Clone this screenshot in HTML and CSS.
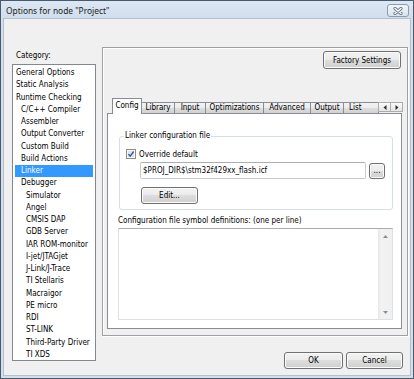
FILE: index.html
```html
<!DOCTYPE html>
<html>
<head>
    <meta charset="utf-8">
    <title>Options for node "Project"</title>
    <link rel="stylesheet" href="styles.css">
</head>
<body>
    <div class="window">
        <div class="titlebar">
            <span class="title">Options for node "Project"</span>
            <span class="close">
                <svg width="10" height="8" viewBox="0 0 10 8"><path d="M2 1.5L8 6.5M8 1.5L2 6.5" stroke="#6a788a" stroke-width="3.2" stroke-linecap="round"/><path d="M2 1.5L8 6.5M8 1.5L2 6.5" stroke="#fff" stroke-width="1.4" stroke-linecap="round"/></svg>
            </span>
        </div>

        <div class="client">
            <div class="category">
                <div class="cat-label">Category:</div>
                <ul class="cat-list">
                    <li>General Options</li>
                    <li>Static Analysis</li>
                    <li>Runtime Checking</li>
                    <li class="lvl1">C/C++ Compiler</li>
                    <li class="lvl1">Assembler</li>
                    <li class="lvl1">Output Converter</li>
                    <li class="lvl1">Custom Build</li>
                    <li class="lvl1">Build Actions</li>
                    <li class="lvl1 selected">Linker</li>
                    <li class="lvl1">Debugger</li>
                    <li class="lvl2">Simulator</li>
                    <li class="lvl2">Angel</li>
                    <li class="lvl2">CMSIS DAP</li>
                    <li class="lvl2">GDB Server</li>
                    <li class="lvl2">IAR ROM-monitor</li>
                    <li class="lvl2">I-jet/JTAGjet</li>
                    <li class="lvl2">J-Link/J-Trace</li>
                    <li class="lvl2">TI Stellaris</li>
                    <li class="lvl2">Macraigor</li>
                    <li class="lvl2">PE micro</li>
                    <li class="lvl2">RDI</li>
                    <li class="lvl2">ST-LINK</li>
                    <li class="lvl2">Third-Party Driver</li>
                    <li class="lvl2">TI XDS</li>
                </ul>
            </div>

            <div class="right">
                <div class="panel">
                    <div class="panel-top">
                        <button class="btn factory">Factory Settings</button>
                    </div>

                    <div class="tab-strip">
                        <div class="tab active w-config">Config</div>
                        <div class="tab w-library">Library</div>
                        <div class="tab w-input">Input</div>
                        <div class="tab w-optim">Optimizations</div>
                        <div class="tab w-adv">Advanced</div>
                        <div class="tab w-output">Output</div>
                        <div class="tab w-list">List</div>
                        <div class="tab-arrows">
                            <span class="arrow"><svg width="4" height="5" viewBox="0 0 4 5"><path d="M3.5 0L0.5 2.5L3.5 5Z" fill="#2b2b2b"/></svg></span>
                            <span class="arrow"><svg width="4" height="5" viewBox="0 0 4 5"><path d="M0.5 0L3.5 2.5L0.5 5Z" fill="#2b2b2b"/></svg></span>
                        </div>
                    </div>

                    <div class="tab-page">
                        <div class="group">
                            <div class="group-title">Linker configuration file</div>
                            <div class="check-row">
                                <svg class="checkbox" width="10" height="10" viewBox="0 0 10 10"><rect x="0.5" y="0.5" width="9" height="9" fill="#f6f6f6" stroke="#8e8f8f"/><rect x="2" y="2" width="6" height="6" fill="#dde4ec"/><path d="M2.4 5.1L4.2 7.2L7.7 2.5" fill="none" stroke="#3d5b8c" stroke-width="1.4"/></svg>
                                <span>Override default</span>
                            </div>
                            <div class="field-row">
                                <div class="field">$PROJ_DIR$\stm32f429xx_flash.icf</div>
                                <button class="btn browse">...</button>
                            </div>
                            <div class="edit-row">
                                <button class="btn edit">Edit...</button>
                            </div>
                        </div>

                        <div class="defs-label">Configuration file symbol definitions: (one per line)</div>
                        <div class="defs-box">
                            <div class="vscroll">
                                <span class="sarrow"><svg width="5" height="3" viewBox="0 0 5 3"><path d="M0 3L2.5 0L5 3Z" fill="#8d8d8d"/></svg></span>
                                <span class="sarrow"><svg width="5" height="3" viewBox="0 0 5 3"><path d="M0 0L2.5 3L5 0Z" fill="#8d8d8d"/></svg></span>
                            </div>
                        </div>
                    </div>
                </div>

                <div class="footer">
                    <button class="btn ok">OK</button>
                    <button class="btn cancel">Cancel</button>
                </div>
            </div>
        </div>
    </div>
</body>
</html>
```

FILE: styles.css
```css
* {
    margin: 0;
    padding: 0;
    box-sizing: border-box;
}
body {
    background: #f0f0f0;
    font-family: "DejaVu Sans Condensed", "Liberation Sans", sans-serif;
    font-size: 8px;
    color: #000;
}
.window {
    width: 414px;
    height: 379px;
    border: 1px solid #4b5a6b;
    background: #d3dfec;
    display: flex;
    flex-direction: column;
}
.titlebar {
    height: 18px;
    display: flex;
    align-items: flex-start;
    padding: 3px 4px 0 5px;
    background: linear-gradient(#dce7f4, #d0ddec);
}
.title {
    font-family: "Noto Sans", "Liberation Sans", sans-serif;
    font-size: 8.4px;
    line-height: 13px;
    color: #1c1c1c;
}
.close {
    margin-left: auto;
    width: 22px;
    height: 13px;
    border: 1px solid #8d9bae;
    border-radius: 3px;
    background: linear-gradient(#f1f5fa, #d9e3ee);
    display: flex;
    align-items: center;
    justify-content: center;
}
.client {
    flex: 1;
    margin: 0 3px 3px;
    background: #f0f0f0;
    display: flex;
    padding: 28px 0 0 8px;
    box-shadow: 0 0 0 1px #b3c0cf;
}

/* category list */
.category {
    width: 84px;
}
.cat-label {
    height: 17px;
    line-height: 17px;
    padding-left: 4px;
}
.cat-list {
    list-style: none;
    height: 297px;
    background: #fff;
    border: 1px solid #828790;
    padding: 2px 2px 0;
}
.cat-list li {
    height: 12.26px;
    line-height: 12.26px;
    padding-left: 1px;
    white-space: nowrap;
}
.cat-list .lvl1 {
    padding-left: 6px;
}
.cat-list .lvl2 {
    padding-left: 11px;
}
.cat-list .selected {
    background: #3399ff;
    color: #fff;
}

/* right side */
.right {
    margin-left: 6px;
    width: 306px;
    display: flex;
    flex-direction: column;
}
.panel {
    height: 289px;
    border: 1px solid #a0a0a0;
    box-shadow: 1px 1px 0 #fff, inset 1px 1px 0 #fff;
    padding: 3px 5px 6px 4px;
}
.panel-top {
    display: flex;
    justify-content: flex-end;
    padding-right: 1px;
    margin-bottom: 29px;
}
.btn {
    font: inherit;
    color: #000;
    border: 1px solid #707070;
    border-radius: 3px;
    background: linear-gradient(#f2f2f2 0%, #ebebeb 49%, #dddddd 50%, #cfcfcf 100%);
    box-shadow: inset 0 0 0 1px #fbfbfb;
    height: 17px;
}
.factory {
    width: 78px;
    height: 18px;
}

/* tabs */
.tab-strip {
    position: relative;
    display: flex;
    align-items: flex-end;
    height: 15px;
    padding-left: 5px;
}
.tab {
    height: 11px;
    line-height: 10px;
    margin-left: -1px;
    border: 1px solid #898c95;
    border-bottom: 0;
    background: linear-gradient(#f3f3f3, #ebebeb 50%, #dddddd 50%, #d2d2d2);
    text-align: center;
    white-space: nowrap;
    overflow: hidden;
}
.tab.active {
    height: 16px;
    line-height: 14px;
    margin-left: 0;
    margin-bottom: -1px;
    background: #fff;
    position: relative;
    z-index: 1;
}
.w-config { width: 30px; }
.w-library { width: 34px; }
.w-input { width: 32px; }
.w-optim { width: 59px; }
.w-adv { width: 48px; }
.w-output { width: 34px; }
.w-list { width: 36px; text-align: left; padding-left: 5px; }
.tab-arrows {
    position: absolute;
    right: -1px;
    top: 4px;
    z-index: 2;
    display: flex;
    background: #f0f0f0;
}
.arrow {
    width: 13px;
    height: 10px;
    border: 1px solid #acacac;
    background: linear-gradient(#fbfbfb, #e4e4e4);
    display: flex;
    align-items: center;
    justify-content: center;
}
.arrow + .arrow {
    margin-left: -1px;
}
.tab-page {
    height: 216px;
    border: 1px solid #898c95;
    background: #fff;
}

/* linker config group */
.group {
    margin: 22px 0 0 11px;
    width: 274px;
    height: 74px;
    border: 1px solid #d5dfe5;
    border-radius: 3px;
}
.group-title {
    width: max-content;
    margin: -7px 0 0 4px;
    padding: 0 1px;
    background: #fff;
    line-height: 12px;
}
.check-row {
    display: flex;
    align-items: center;
    height: 12px;
    margin-top: 6px;
    padding-left: 6px;
}
.checkbox {
    margin-right: 3px;
}
.field-row {
    display: flex;
    align-items: center;
    margin-top: 2px;
    padding-left: 20px;
}
.field {
    width: 226px;
    height: 17px;
    line-height: 15px;
    padding-left: 2px;
    border: 1px solid #c8ccd3;
    border-top-color: #abadb3;
    border-radius: 2px;
    white-space: nowrap;
}
.browse {
    width: 16px;
    height: 16px;
    margin-left: 3px;
    line-height: 10px;
}
.edit-row {
    margin-top: 8px;
    padding-left: 21px;
}
.edit {
    width: 57px;
}
.defs-label {
    margin: 5px 0 0 10px;
    line-height: 12px;
}
.defs-box {
    margin: 1px 0 0 10px;
    width: 275px;
    height: 92px;
    border: 1px solid #dbdfe6;
    border-top-color: #abadb3;
    display: flex;
    justify-content: flex-end;
}
.vscroll {
    width: 14px;
    background: linear-gradient(90deg, #e6e6e6, #f2f2f2 20%, #f0f0f0);
    display: flex;
    flex-direction: column;
    justify-content: space-between;
}
.sarrow {
    height: 14px;
    display: flex;
    align-items: center;
    justify-content: center;
}

/* dialog buttons */
.footer {
    display: flex;
    justify-content: flex-end;
    gap: 3px;
    margin-top: 16px;
    padding-right: 5px;
}
.ok {
    width: 59px;
}
.cancel {
    width: 57px;
}
```
